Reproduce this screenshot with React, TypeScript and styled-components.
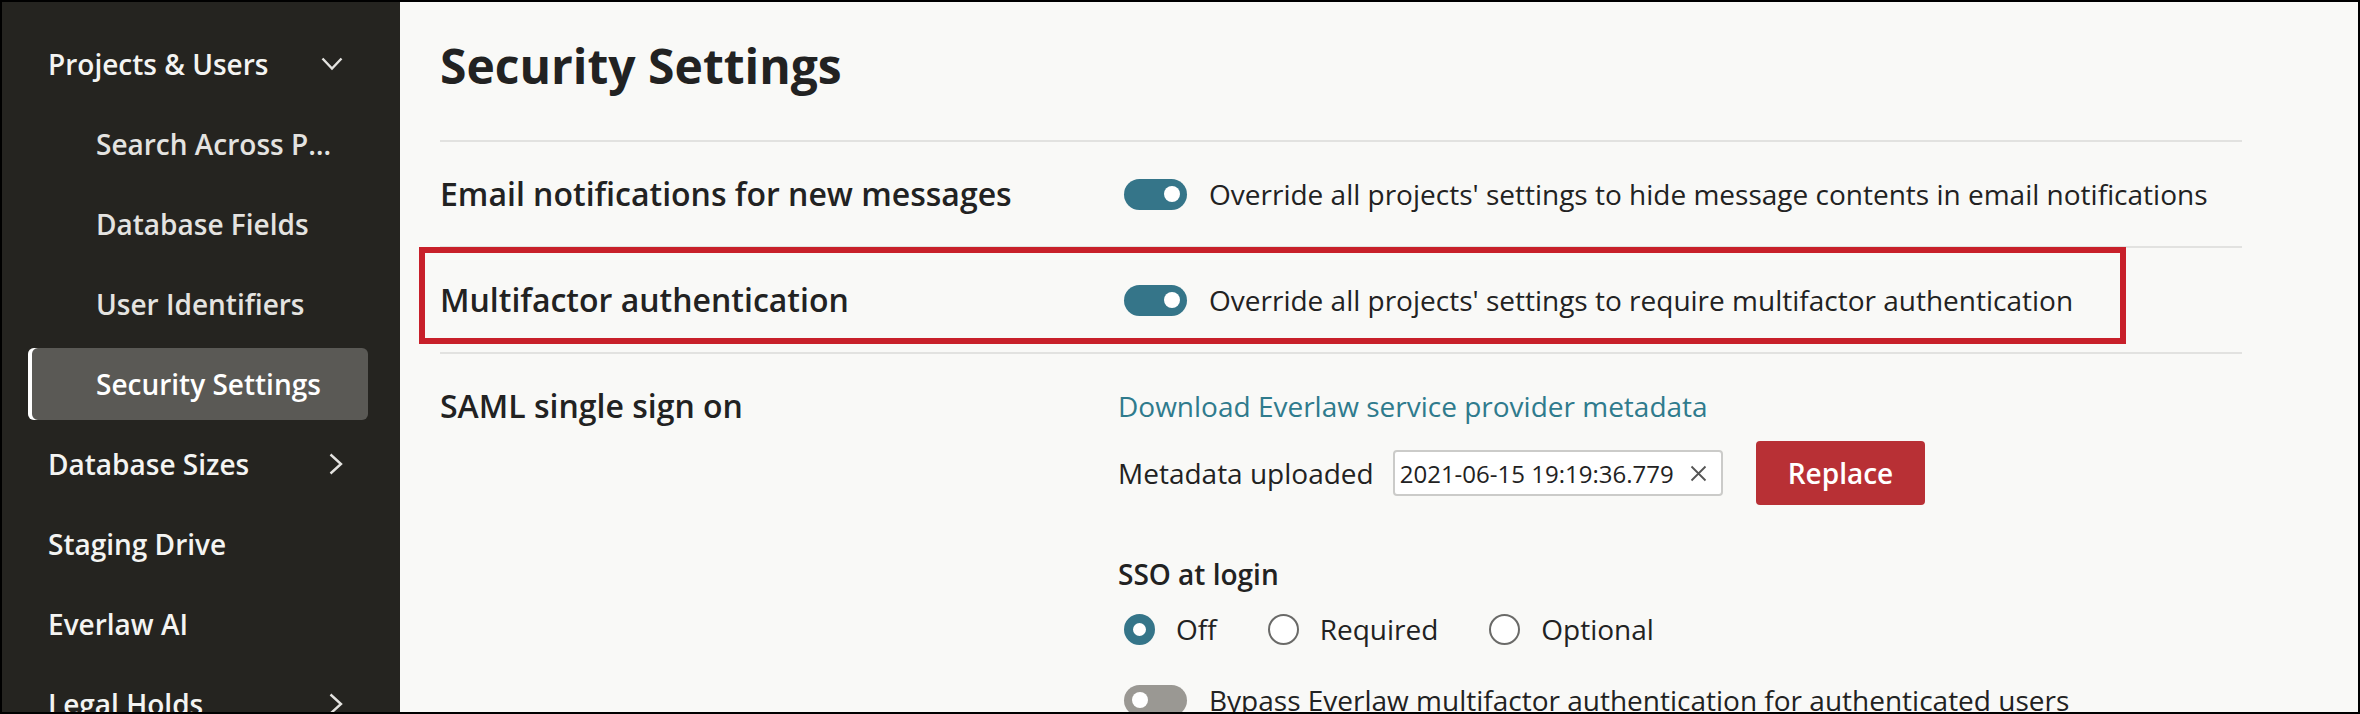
import React from 'react'
import styled, { createGlobalStyle, css } from 'styled-components'

const GlobalStyle = createGlobalStyle`
  html, body {
    margin: 0;
    padding: 0;
    background: #fff;
  }
  body {
    font-family: 'Open Sans', 'Noto Sans', sans-serif;
    -webkit-font-smoothing: antialiased;
  }
  * {
    box-sizing: border-box;
  }
`

const Frame = styled.div`
  position: relative;
  display: flex;
  width: 2360px;
  height: 714px;
  border: 2px solid #000;
  overflow: hidden;
`

const Sidebar = styled.nav`
  display: flex;
  flex: none;
  flex-direction: column;
  gap: 8px;
  width: 398px;
  padding: 26px 32px 0 26px;
  background: #252420;
`

const NavItem = styled.div<{ $sub?: boolean; $active?: boolean }>`
  display: flex;
  flex: none;
  align-items: center;
  justify-content: space-between;
  gap: 12px;
  height: 72px;
  padding: 0 ${(p) => (p.$sub ? 32 : 25)}px 0 ${(p) => (p.$sub ? 68 : 20)}px;
  border-radius: 6px;
  color: ${(p) => (p.$sub ? '#e4e3e0' : '#f4f4f2')};
  font-size: 28px;
  font-weight: 600;

  ${(p) =>
    p.$active &&
    css`
      background: #5a5955;
      box-shadow: inset 4px 0 0 #fff;
      color: #fff;
    `}
`

const NavLabel = styled.span`
  min-width: 0;
  overflow: hidden;
  white-space: nowrap;
  text-overflow: ellipsis;
`

const Main = styled.main`
  flex: 1;
  padding: 0 116px 0 40px;
  background: #f9f9f7;
  color: #222;
  overflow: hidden;
`

const Header = styled.header`
  height: 140px;
  padding-top: 32px;
  border-bottom: 2px solid #e2e2e0;
`

const Title = styled.h1`
  margin: 0;
  font-size: 48px;
  font-weight: 700;
  line-height: 64px;
  color: #222;
`

const Row = styled.section<{ $top?: boolean }>`
  position: relative;
  display: grid;
  grid-template-columns: 678px 1fr;
  align-items: ${(p) => (p.$top ? 'start' : 'center')};
  min-height: 106px;
  padding-top: ${(p) => (p.$top ? 32 : 0)}px;
  border-bottom: 2px solid #e2e2e0;
`

const RowLabel = styled.div`
  font-size: 32px;
  font-weight: 600;
  line-height: 40px;
  white-space: nowrap;
`

// red call-out drawn over the MFA row
const Annotation = styled.div`
  position: absolute;
  top: -1px;
  left: -21px;
  width: 1707px;
  height: 97px;
  border: 6px solid #c8202a;
  pointer-events: none;
`

const Setting = styled.div`
  display: flex;
  flex-direction: column;
`

const ToggleLine = styled.div<{ $gapTop?: number }>`
  display: flex;
  align-items: center;
  gap: 22px;
  margin-top: ${(p) => p.$gapTop ?? 0}px;
  font-size: 28px;
  line-height: 40px;
  white-space: nowrap;
`

const Toggle = styled.span<{ $on?: boolean }>`
  position: relative;
  flex: none;
  width: 63px;
  height: 31px;
  margin-left: 6px;
  border-radius: 16px;
  background: ${(p) => (p.$on ? '#357589' : '#9a9893')};

  &::after {
    content: '';
    position: absolute;
    top: 7.5px;
    width: 16px;
    height: 16px;
    border-radius: 50%;
    background: #fff;
    ${(p) => (p.$on ? 'right: 7px;' : 'left: 8px;')}
  }
`

const Link = styled.a`
  font-size: 28px;
  line-height: 40px;
  color: #2f7b8d;
  text-decoration: none;
  white-space: nowrap;
`

const MetaLine = styled.div`
  display: flex;
  align-items: center;
  margin-top: 15px;
  font-size: 28px;
  white-space: nowrap;
`

const MetaInput = styled.div`
  display: flex;
  align-items: center;
  justify-content: space-between;
  width: 330px;
  height: 46px;
  margin-left: 19px;
  padding: 0 14px 0 5px;
  border: 2px solid #cbcbc9;
  border-radius: 4px;
  background: #fff;
  font-size: 24px;

  svg {
    flex: none;
  }
`

const ReplaceButton = styled.button`
  height: 64px;
  margin-left: 33px;
  padding: 0 32px;
  border: none;
  border-radius: 4px;
  background: #b83035;
  color: #fff;
  font-family: inherit;
  font-size: 28px;
  font-weight: 600;
`

const SubHeading = styled.div`
  margin-top: 49px;
  font-size: 28px;
  font-weight: 600;
  line-height: 40px;
`

const RadioGroup = styled.div`
  display: flex;
  align-items: center;
  gap: 51px;
  margin-top: 15px;
  font-size: 28px;
  line-height: 40px;
`

const RadioOption = styled.label`
  display: flex;
  align-items: center;
  gap: 21px;
`

const Radio = styled.span<{ $checked?: boolean }>`
  flex: none;
  width: 31px;
  height: 31px;
  margin-left: ${(p) => (p.$checked ? 6 : 0)}px;
  border: ${(p) => (p.$checked ? '9.5px solid #357589' : '2px solid #6a6a68')};
  border-radius: 50%;
  background: #fff;
`

const ChevronDown = () => (
  <svg width="22" height="14" viewBox="0 0 22 14" fill="none">
    <polyline points="1.5,1.5 11,11.5 20.5,1.5" stroke="#e4e3e0" strokeWidth="2.4" />
  </svg>
)

const ChevronRight = () => (
  <svg width="14" height="22" viewBox="0 0 14 22" fill="none">
    <polyline points="1.5,1.5 12,11 1.5,20.5" stroke="#e4e3e0" strokeWidth="2.4" />
  </svg>
)

const CloseIcon = () => (
  <svg width="17" height="17" viewBox="0 0 17 17" fill="none">
    <path d="M1.5 1.5 L15.5 15.5 M15.5 1.5 L1.5 15.5" stroke="#555" strokeWidth="1.8" />
  </svg>
)

const navItems = [
  { label: 'Projects & Users', icon: 'down' },
  { label: 'Search Across Projects', sub: true },
  { label: 'Database Fields', sub: true },
  { label: 'User Identifiers', sub: true },
  { label: 'Security Settings', sub: true, active: true },
  { label: 'Database Sizes', icon: 'right' },
  { label: 'Staging Drive' },
  { label: 'Everlaw AI' },
  { label: 'Legal Holds', icon: 'right' },
]

export default function App() {
  return (
    <>
      <GlobalStyle />
      <Frame>
        <Sidebar>
          {navItems.map((item) => (
            <NavItem key={item.label} $sub={item.sub} $active={item.active}>
              <NavLabel>{item.label}</NavLabel>
              {item.icon === 'down' && <ChevronDown />}
              {item.icon === 'right' && <ChevronRight />}
            </NavItem>
          ))}
        </Sidebar>
        <Main>
          <Header>
            <Title>Security Settings</Title>
          </Header>
          <Row>
            <RowLabel>Email notifications for new messages</RowLabel>
            <ToggleLine>
              <Toggle $on />
              Override all projects' settings to hide message contents in email notifications
            </ToggleLine>
          </Row>
          <Row>
            <Annotation />
            <RowLabel>Multifactor authentication</RowLabel>
            <ToggleLine>
              <Toggle $on />
              Override all projects' settings to require multifactor authentication
            </ToggleLine>
          </Row>
          <Row $top>
            <RowLabel>SAML single sign on</RowLabel>
            <Setting>
              <Link href="#">Download Everlaw service provider metadata</Link>
              <MetaLine>
                Metadata uploaded
                <MetaInput>
                  <span>2021-06-15 19:19:36.779</span>
                  <CloseIcon />
                </MetaInput>
                <ReplaceButton>Replace</ReplaceButton>
              </MetaLine>
              <SubHeading>SSO at login</SubHeading>
              <RadioGroup>
                <RadioOption>
                  <Radio $checked />
                  Off
                </RadioOption>
                <RadioOption>
                  <Radio />
                  Required
                </RadioOption>
                <RadioOption>
                  <Radio />
                  Optional
                </RadioOption>
              </RadioGroup>
              <ToggleLine $gapTop={31}>
                <Toggle />
                Bypass Everlaw multifactor authentication for authenticated users
              </ToggleLine>
            </Setting>
          </Row>
        </Main>
      </Frame>
    </>
  )
}
